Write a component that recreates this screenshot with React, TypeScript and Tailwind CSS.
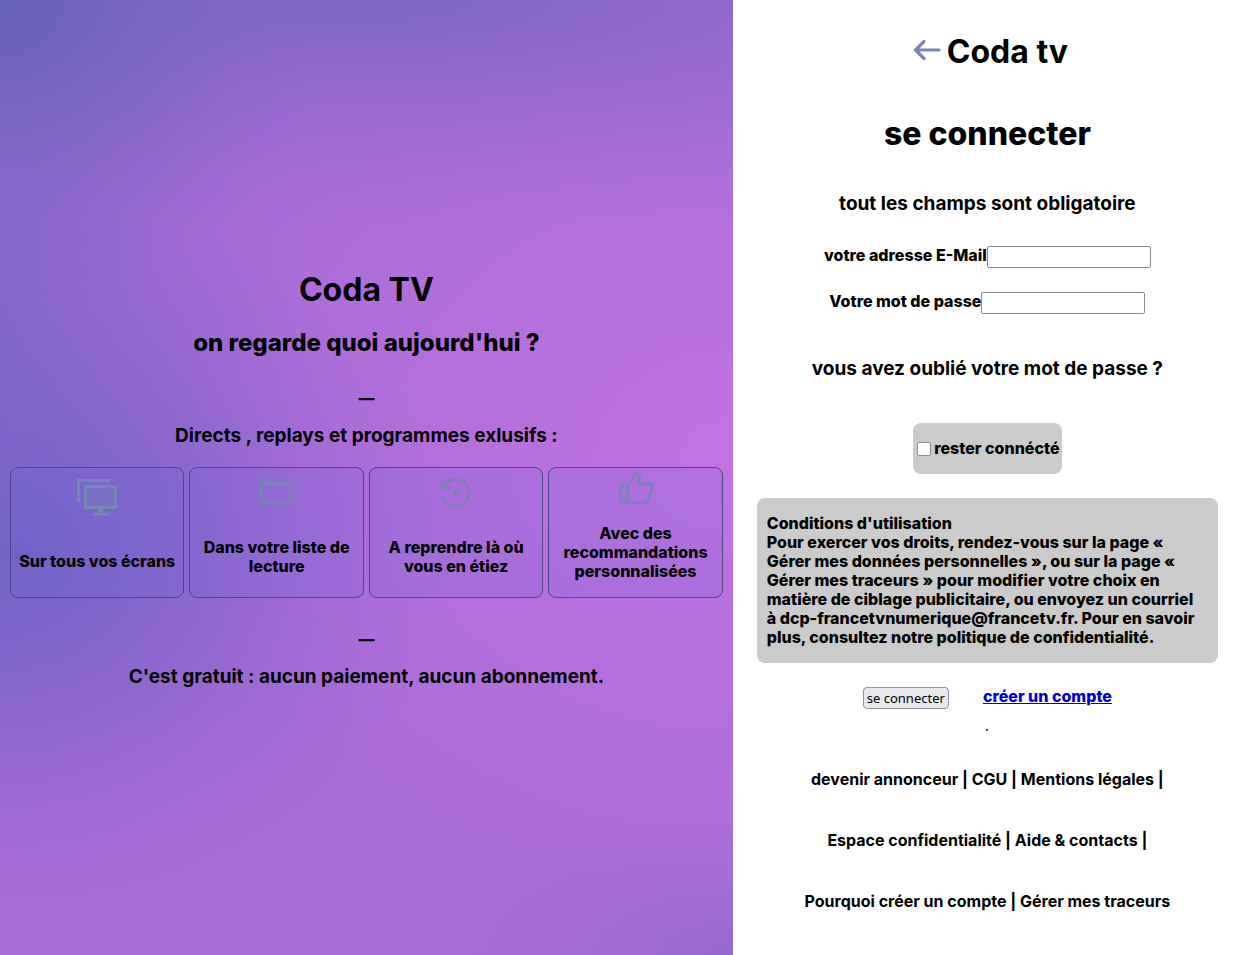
import type { ReactNode } from 'react';

function ScreensIcon() {
  return (
    <svg viewBox="0 0 42 38" className="h-[38px] w-[42px]" fill="none" stroke="#7489b2" strokeWidth="3" aria-hidden="true">
      <path d="M2.5 24V2.5H34" />
      <rect x="9.5" y="8.5" width="30" height="21" rx="1" fill="#7489b2" fillOpacity="0.3" />
      <path d="M24.5 30v5M17 36h15" />
      <path d="M22 30h5v4h-5z" fill="#7489b2" stroke="none" />
    </svg>
  );
}

function PlaylistIcon() {
  return (
    <svg viewBox="0 0 38 38" className="size-[38px]" fill="none" stroke="#7c82b8" strokeWidth="3.500" aria-hidden="true">
      <path d="M20 29.500H5.500a2 2 0 0 1-2-2V9.500a2 2 0 0 1 2-2H14l4 3.500h14.500a2 2 0 0 1 2 2V20" />
      <path d="M3 6h12l4 4v3H3z" fill="#7c82b8" stroke="none" />
      <path d="M24 28l4.500 4L36 24" />
    </svg>
  );
}

function ResumeIcon() {
  return (
    <svg viewBox="0 0 38 38" className="size-[38px]" fill="none" stroke="#857cba" strokeWidth="3" aria-hidden="true">
      <path d="M5.500 23.500a13.500 13.500 0 1 0 3-13" />
      <path d="M4 6.500v9h9z" fill="#857cba" stroke="#857cba" strokeWidth="1.500" />
      <circle cx="19" cy="19.500" r="3.500" fill="#857cba" stroke="none" />
    </svg>
  );
}

function ThumbIcon() {
  return (
    <svg viewBox="0 0 38 38" className="size-[38px]" fill="none" stroke="#7f80bc" strokeWidth="3" strokeLinejoin="round" aria-hidden="true">
      <path d="M3.500 16.500h7v17h-7z" fill="#7f80bc" fillOpacity="0.4" />
      <path d="M10.500 17L17.500 6c1-2.500 5-2 5 1.500L21.500 15H33c2 0 2.500 1.500 2 3.500l-4 12.500c-.5 1.500-1.500 2.500-3 2.500H10.500z" />
    </svg>
  );
}

const features: { icon: ReactNode; text: string }[] = [
  { icon: <ScreensIcon />, text: 'Sur tous vos écrans' },
  { icon: <PlaylistIcon />, text: 'Dans votre liste de lecture' },
  { icon: <ResumeIcon />, text: 'A reprendre là où vous en étiez' },
  { icon: <ThumbIcon />, text: 'Avec des recommandations personnalisées' },
];

function Promo() {
  return (
    <section className="flex w-[59%] flex-col items-center justify-center bg-[radial-gradient(ellipse_45%_32%_at_0%_0%,#6561b8_0%,#6561b877_40%,#6561b822_75%,transparent_100%),radial-gradient(ellipse_150%_24%_at_50%_0%,#7d66c4_0%,#7d66c477_40%,#7d66c422_75%,transparent_100%),radial-gradient(ellipse_62%_38%_at_0%_58%,#7362c5_0%,#7362c5aa_30%,#7362c533_70%,transparent_100%),radial-gradient(ellipse_45%_60%_at_0%_32%,#8867ca_0%,#8867ca77_40%,#8867ca22_75%,transparent_100%),radial-gradient(ellipse_40%_14%_at_100%_100%,#966acf_0%,#966acf55_50%,transparent_100%),radial-gradient(ellipse_75%_46%_at_100%_48%,#c274e2_0%,#c274e277_45%,transparent_100%)] bg-[#ab6dd8] px-[10px] pt-1 text-center">
      <h1 className="text-[32px] leading-[38px] font-bold">Coda TV</h1>
      <h2 className="mt-5 text-[24px] leading-[28px] font-extrabold">on regarde quoi aujourd'hui ?</h2>
      <p className="mt-[30px] text-[16px] leading-[22px] font-black">—</p>
      <h3 className="mt-4 text-[19px] leading-[22px] font-bold">Directs , replays et programmes exlusifs :</h3>
      <ul className="mt-5 grid w-full grid-cols-4 gap-[5px]">
        {features.map((feature) => (
          <li
            key={feature.text}
            className="flex h-[131px] flex-col items-center justify-around rounded-lg border border-[#4a4688] bg-[#6464dc]/15 px-1 text-[16px] leading-[19px]"
          >
            {feature.icon}
            <p className="py-4">{feature.text}</p>
          </li>
        ))}
      </ul>
      <p className="mt-[30px] text-[16px] leading-[22px] font-black">—</p>
      <h3 className="mt-4 text-[19px] leading-[22px] font-bold">C'est gratuit : aucun paiement, aucun abonnement.</h3>
    </section>
  );
}

const field = 'h-[22px] w-[164px] rounded-[2px] border border-[#8a8a8a] bg-white px-1 text-[13px] font-normal';

function Login() {
  return (
    <main className="flex min-w-0 flex-1 flex-col items-center bg-white px-6 pt-[33px] text-center text-[16px] leading-[19px]">
      <h1 className="flex items-center gap-[6px] pl-[6px] text-[32px] leading-[38px] font-bold">
        <a href="#retour" aria-label="Retour">
          <svg viewBox="0 0 28 26" className="h-[26px] w-7" fill="none" stroke="#7b86b6" strokeWidth="3.200" strokeLinecap="round" strokeLinejoin="round" aria-hidden="true">
            <path d="M26 11H3M11 2.500L2.500 11l8.500 8.500" />
          </svg>
        </a>
        Coda tv
      </h1>
      <h1 className="mt-11 text-[32px] leading-[38px]">se connecter</h1>
      <form className="flex w-full flex-col items-center" onSubmit={(e) => e.preventDefault()}>
        <h3 className="mt-10 text-[19px] leading-[22px] font-bold">tout les champs sont obligatoire</h3>
        <div className="mt-[31px] flex">
          <label htmlFor="email">votre adresse E-Mail</label>
          <input id="email" type="email" className={field} />
        </div>
        <div className="mt-6 flex">
          <label htmlFor="password">Votre mot de passe</label>
          <input id="password" type="password" className={field} />
        </div>
        <h3 className="mt-11 text-[19px] leading-[22px] font-bold">vous avez oublié votre mot de passe ?</h3>
        <div className="mt-[43px] flex h-[51px] items-center gap-[3px] rounded-lg bg-[#cbcbcb] pr-[2px] pl-1">
          <input
            id="stay"
            type="checkbox"
            className="size-[14px] appearance-none rounded-[2px] border border-[#8f8f8f] bg-white checked:bg-[#0075ff]"
          />
          <label htmlFor="stay">rester connécté</label>
        </div>
        <p className="mt-6 w-full rounded-lg bg-[#cbcbcb] px-[10px] py-4 text-left">
          Conditions d'utilisation
          <br />
          Pour exercer vos droits, rendez-vous sur la page « Gérer mes données personnelles », ou sur la page « Gérer
          mes traceurs » pour modifier votre choix en matière de ciblage publicitaire, ou envoyez un courriel
          <br />à dcp-francetvnumerique@francetv.fr. Pour en savoir plus, consultez notre politique de confidentialité.
        </p>
        <div className="mt-6 flex gap-[34px]">
          <button
            type="submit"
            className="h-[22px] rounded-[4px] border border-[#8f8f9d] bg-[#e9e9ed] px-[3px] font-['Noto_Sans',sans-serif] text-[13px] leading-[18px] font-normal"
          >
            se connecter
          </button>
          <a href="#inscription" className="text-[#0000d0] underline">
            créer un compte
          </a>
        </div>
      </form>
      <hr className="mt-5 size-[2px] border-0 bg-[#555555]" />
      <footer className="mt-[39px] flex flex-col gap-[42px] font-bold">
        <p>devenir annonceur | CGU | Mentions légales |</p>
        <p>Espace confidentialité | Aide &amp; contacts |</p>
        <p>Pourquoi créer un compte | Gérer mes traceurs</p>
      </footer>
    </main>
  );
}

export default function App() {
  return (
    <div className="flex min-h-screen font-['Inter','Liberation_Sans',sans-serif] font-extrabold text-black">
      <Promo />
      <Login />
    </div>
  );
}
